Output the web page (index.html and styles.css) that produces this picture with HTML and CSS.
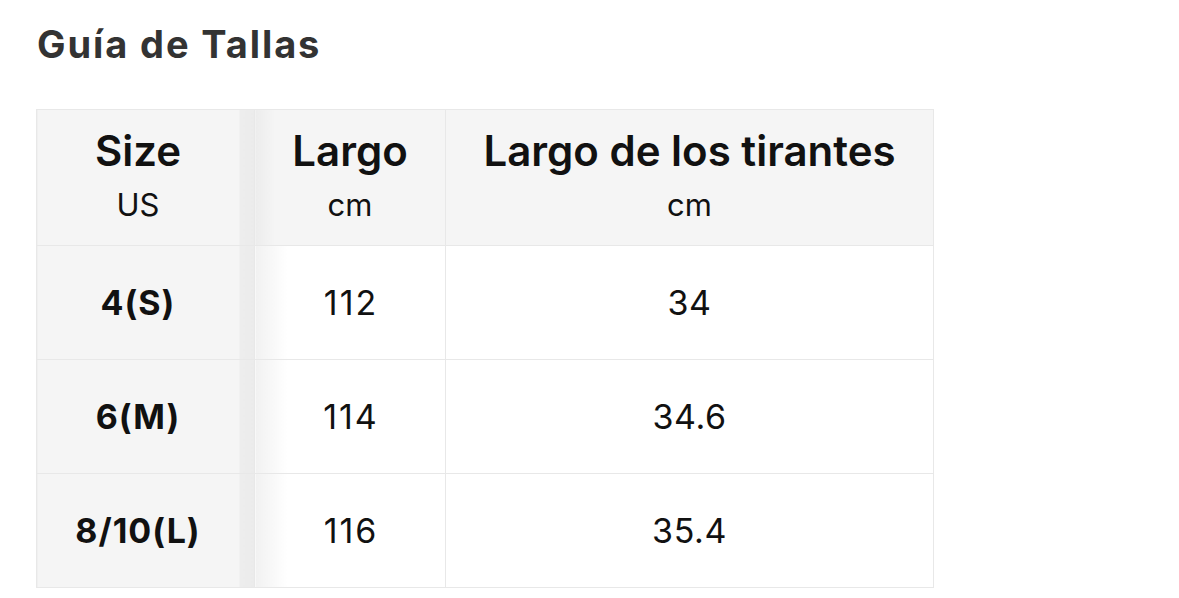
FILE: index.html
```html
<!DOCTYPE html>
<html lang="es">
<head>
<meta charset="utf-8">
<title>Guía de Tallas</title>
<link rel="stylesheet" href="styles.css">
</head>
<body>
<main class="page">
  <h2 class="title">Guía de Tallas</h2>
  <table class="size-table">
    <thead>
      <tr>
        <th class="col-size"><span class="h-main">Size</span><span class="h-sub">US</span></th>
        <th class="col-largo"><span class="h-main">Largo</span><span class="h-sub">cm</span></th>
        <th class="col-tir"><span class="h-main">Largo de los tirantes</span><span class="h-sub">cm</span></th>
      </tr>
    </thead>
    <tbody>
      <tr><th class="col-size">4(S)</th><td class="col-largo">112</td><td class="col-tir">34</td></tr>
      <tr><th class="col-size">6(M)</th><td class="col-largo">114</td><td class="col-tir">34.6</td></tr>
      <tr><th class="col-size">8/10(L)</th><td class="col-largo">116</td><td class="col-tir">35.4</td></tr>
    </tbody>
  </table>
</main>
</body>
</html>
```
FILE: styles.css
```css
html, body {
  margin: 0;
  padding: 0;
  background: #ffffff;
}
body {
  font-family: Inter, "Liberation Sans", Arial, sans-serif;
  color: #111111;
}
.page {
  padding: 21px 0 0 36px;
}
.title {
  margin: 0 0 42px 1px;
  font-size: 38px;
  line-height: 46px;
  font-weight: 700;
  color: #333333;
  letter-spacing: 1.9px;
}
.size-table {
  border-collapse: collapse;
  table-layout: fixed;
  width: 896px;
  text-align: center;
}
.size-table th,
.size-table td {
  border: 1px solid #e8e8e8;
  padding: 0;
  vertical-align: middle;
}
.col-size { width: 202px; }
.col-largo { width: 190px; }
.col-tir { width: 487px; }
thead tr { height: 136px; }
tbody tr { height: 114px; }
thead th {
  background: #f5f5f5;
}
.size-table thead th {
  vertical-align: top;
  padding-top: 16px;
}
.size-table th.col-size {
  padding-right: 15px;
  background: linear-gradient(to right, #f5f5f5 0, #f5f5f5 calc(100% - 15px), #ededed calc(100% - 15px), #ebebeb 100%);
}
thead th.col-largo {
  background: linear-gradient(to right, #ececec 0, #f5f5f5 20px);
}
tbody td.col-largo {
  background: linear-gradient(to right, #f1f1f1 0, #ffffff 32px);
}
.h-main {
  display: block;
  font-size: 42px;
  line-height: 50px;
  font-weight: 600;
  color: #111111;
}
.h-sub {
  display: block;
  font-size: 31px;
  line-height: 58px;
  font-weight: 400;
  color: #111111;
}
tbody th {
  font-size: 34px;
  font-weight: 700;
  letter-spacing: 1px;
  color: #111111;
}
tbody td {
  font-size: 34px;
  font-weight: 400;
  letter-spacing: 0.6px;
  color: #111111;
}
tbody td.col-largo {
  letter-spacing: 2px;
  text-indent: 2px;
}
```
